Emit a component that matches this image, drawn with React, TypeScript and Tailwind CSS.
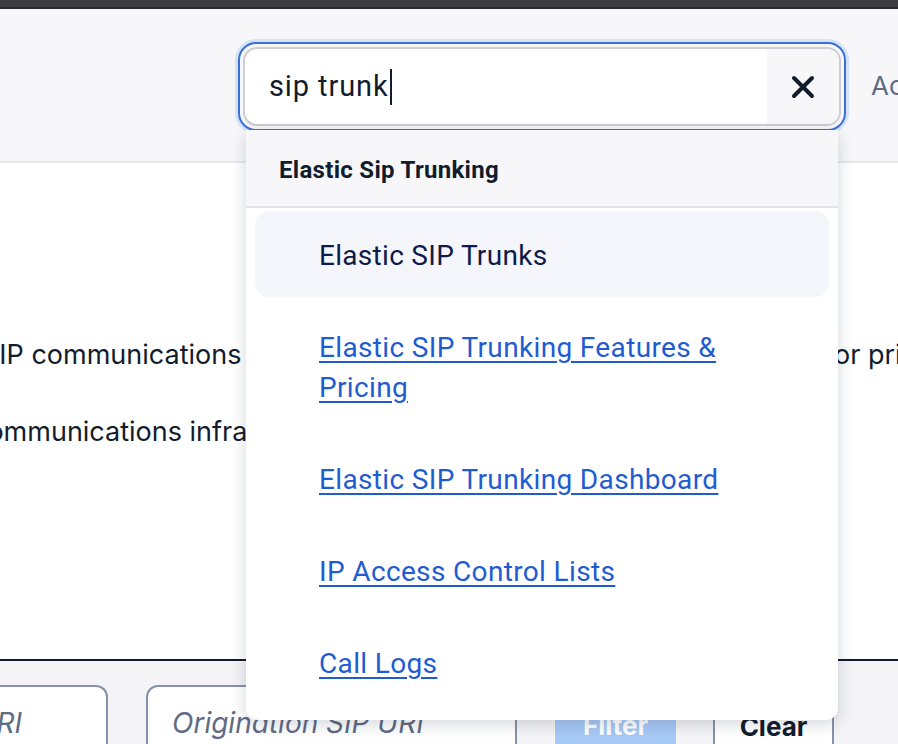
const links = [
  ["Elastic SIP Trunking Features &", "Pricing"],
  ["Elastic SIP Trunking Dashboard"],
  ["IP Access Control Lists"],
  ["Call Logs"],
];

export default function App() {
  return (
    <div className="relative w-[898px] h-[744px] overflow-hidden bg-white font-['Inter',sans-serif] text-[#121c2d]">
      <div className="h-[9px] bg-[#3c3b41] border-b-2 border-[#2a292e]" />

      {/* header with search */}
      <header className="h-[154px] bg-[#f7f7f9] border-b-2 border-[#e8e8ec] flex items-start pl-[238px] pt-[33px] overflow-hidden">
        <div className="w-[608px] shrink-0 h-[89px] rounded-[18px] border-2 border-[#3a6fd8] p-[3px] shadow-[0_0_0_3px_#d4e3fb]">
          <div className="h-full flex rounded-[14px] border-2 border-[#cdcdd3] bg-white overflow-hidden">
            <div className="flex-1 flex items-center pl-[24px] font-['Roboto',sans-serif] text-[29px] tracking-[0.9px]">
              sip trunk
              <span className="inline-block w-[2px] h-[36px] bg-[#121c2d] ml-[1px]" />
            </div>
            <button className="w-[72px] flex items-center justify-center bg-[#f7f7f9]">
              <svg width="24" height="24" viewBox="0 0 24 24" fill="none" stroke="#121c2d" strokeWidth="4" strokeLinecap="round">
                <path d="M3 3l18 18M21 3L3 21" />
              </svg>
            </button>
          </div>
        </div>
        <span className="ml-[25px] mt-[24px] shrink-0 text-[26px] text-[#606b85] whitespace-nowrap">Account</span>
      </header>

      {/* body copy */}
      <main className="text-[27px] whitespace-nowrap">
        <div className="flex mt-[172px] h-[40px] items-center">
          <span className="w-[852px] shrink-0 ml-[-18px] overflow-hidden">SIP communications   with the public internet</span>
          <span>or private networks</span>
        </div>
        <p className="mt-[37px] h-[40px] leading-[40px] ml-[-28px]">communications infrastructure to the cloud</p>
      </main>

      {/* filter bar */}
      <section className="absolute left-0 right-0 top-[659px] bottom-0 border-t-2 border-[#121c2d] bg-[#f4f4f7] flex items-start gap-[38px] pt-[24px]">
        <div className="w-[130px] ml-[-22px] h-[80px] rounded-t-[12px] border-2 border-b-0 border-[#8891aa] bg-white flex items-center justify-end pr-[84px] pb-[6px]">
          <span className="italic text-[28px] text-[#606b85]">URI</span>
        </div>
        <div className="w-[371px] h-[80px] rounded-t-[12px] border-2 border-b-0 border-[#8891aa] bg-white flex items-center pl-[24px] pb-[6px]">
          <span className="italic text-[28px] text-[#606b85]">Origination SIP URI</span>
        </div>
        <div className="flex gap-[37px] mt-[8px]">
          <button className="w-[121px] h-[70px] rounded-t-[8px] bg-[#a6c9f6] text-white font-bold text-[26px] pb-[6px]">Filter</button>
          <button className="w-[121px] h-[70px] rounded-t-[8px] border-2 border-b-0 border-[#8891aa] bg-white font-bold text-[26px] pb-[6px]">Clear</button>
        </div>
      </section>

      {/* dropdown */}
      <div className="absolute left-[246px] top-[130px] w-[592px] h-[590px] bg-white rounded-b-[12px] shadow-[0_4px_16px_rgba(18,28,45,0.18)] font-['Roboto',sans-serif]">
        <div className="h-[78px] bg-[#f7f7f9] border-b-2 border-[#e1e1e6] flex items-center pl-[33px] pt-[4px] text-[24px] font-bold tracking-[0.3px]">
          Elastic Sip Trunking
        </div>
        <ul className="px-[9px]">
          <li className="h-[92px] py-[3px]">
            <div className="h-full rounded-[14px] bg-[#f4f6fb] flex items-center pl-[64px] pt-[4px] text-[28px] tracking-[0.3px] text-[#0f1a4a]">
              Elastic SIP Trunks
            </div>
          </li>
          {links.map((l) => (
            <li key={l[0]} className="pt-[28px] pb-[24px] pl-[64px] text-[28px] tracking-[0.35px] leading-[40px]">
              <a href="#" className="text-[#1f5cd1] underline underline-offset-[4px]">
                {l.map((t) => (
                  <span key={t} className="block w-fit">
                    {t}
                  </span>
                ))}
              </a>
            </li>
          ))}
        </ul>
      </div>
    </div>
  );
}
